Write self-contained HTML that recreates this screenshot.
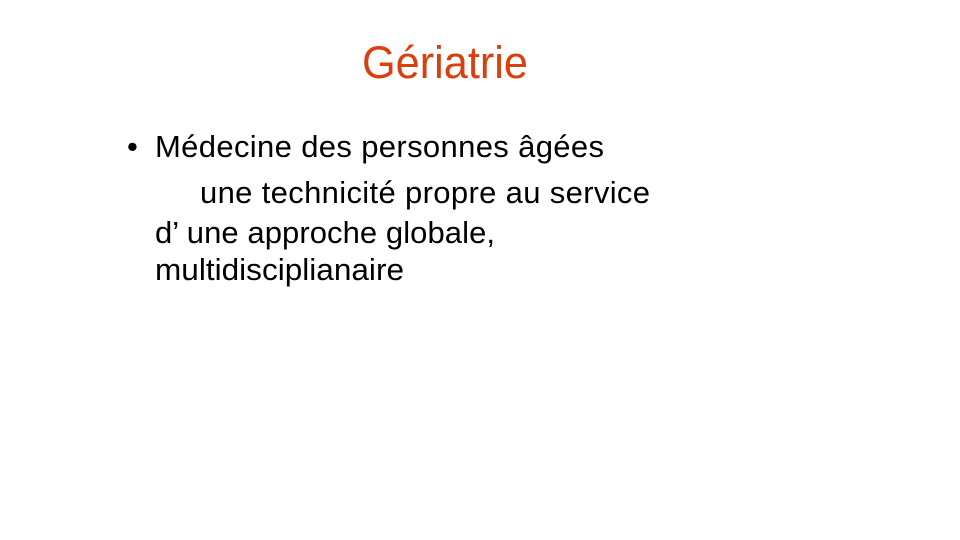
<!DOCTYPE html>
<html><head><meta charset="utf-8"><style>html,body{margin:0;padding:0;background:#fff;width:960px;height:540px;overflow:hidden}</style></head>
<body>
<svg width="960" height="540" xmlns="http://www.w3.org/2000/svg" style="display:block;font-family:'Liberation Sans',Arial,sans-serif">
<rect width="960" height="540" fill="#fff"/>
<text x="362" y="78" font-size="45" fill="#d9400f" textLength="166" lengthAdjust="spacingAndGlyphs">Gériatrie</text>
<g font-size="31" fill="#000">
<text x="127" y="157">•</text>
<text x="155" y="157" textLength="449" lengthAdjust="spacing">Médecine des personnes âgées</text>
<text x="200" y="203" textLength="450" lengthAdjust="spacing">une technicité propre au service</text>
<text x="155" y="243" textLength="340" lengthAdjust="spacing">d’ une approche globale,</text>
<text x="155" y="280" textLength="249" lengthAdjust="spacingAndGlyphs">multidisciplianaire</text>
</g>
</svg>
</body></html>
